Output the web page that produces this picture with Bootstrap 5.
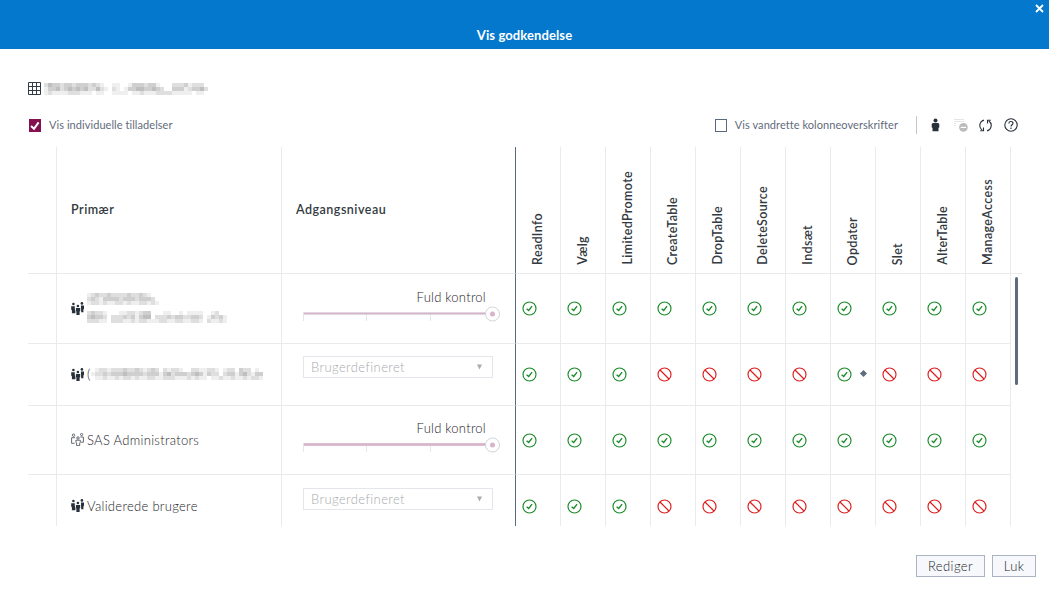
<!DOCTYPE html>
<html lang="da">
<head>
<meta charset="utf-8">
<meta name="viewport" content="width=device-width, initial-scale=1">
<title>Vis godkendelse</title>
<link rel="stylesheet" href="https://cdn.jsdelivr.net/npm/bootstrap@5.3.0/dist/css/bootstrap.min.css">
<style>
body{font-family:Lato,"Liberation Sans",sans-serif;font-size:13px;line-height:18px;color:#333a42;background:#fff;height:590px;overflow:hidden}
svg{display:block;flex:none}
.title-bar{height:49px;background:#0378cd;padding-top:26px;font-size:13px;letter-spacing:.1px}
.close-btn{top:4px;right:5px;width:9px;height:9px}
.object-line{height:14px;margin:32px 0 0 28px}
.mosaic{margin:2px 0 0 3px}
.option-row{height:20px;margin:20px 31px 0 29px;font-size:11px;color:#5f6b7b}
.option-row .caption-text{letter-spacing:.06px;margin-top:-1px}
.tick-box{width:12px;height:13px;border:1px solid #5c6a80;background:#fff}
.tick-box.on{background:#84104f;border-color:#84104f}
.divider{width:1px;height:18px;background:#c3c8d0;margin-left:18px}
.tools svg:nth-child(1){margin-left:14px}
.tools svg:nth-child(2){margin-left:14px}
.tools svg:nth-child(3){margin-left:11px}
.tools svg:nth-child(4){margin-left:12px}
.grid-wrap{height:379px;width:994px;margin:12px 0 0 28px}
.grid-table{width:994px;table-layout:fixed;border-collapse:separate;border-spacing:0}
.grid-table th,.grid-table td{padding:0;border:0 solid #e9eaeb;border-width:0 1px 1px 0;vertical-align:middle}
.grid-table th{height:127px;font-weight:600;font-size:12.5px}
.grid-table th.lead-col{padding-left:14px;letter-spacing:.5px}
.grid-table .level{border-right-color:#5c6a7d}
.grid-table td.rest{border:0}
.grid-table th.rest{border-right:0}
.grid-table th.perm{vertical-align:bottom}
.vert{writing-mode:vertical-rl;transform:rotate(180deg);margin:0 auto 8px 13px;line-height:18px;font-weight:600;white-space:nowrap;letter-spacing:.34px}
.who{padding-left:14px;gap:3px}
.who-name{letter-spacing:.3px;margin-top:-1px}
.light-text{font-weight:300;color:#1c232b}
.slider-box{width:197px;margin:-8px 0 0 21px}
.slider-label{padding-right:14px;line-height:18px;letter-spacing:.25px}
.drop-box{width:190px;height:22px;margin:-15px 0 0 21px;padding:0 10px 0 7px;border:1px solid #e3e6ea;color:#a9abae;letter-spacing:.4px}
.perm-icon{margin-left:5.5px}
.mark-dot{width:5px;height:5px;background:#5f6c80;transform:rotate(45deg);margin:-2px 0 0 9.5px}
.thumb{top:277px;left:1015px;width:3px;height:108px;background:#5f6c80}
.foot{margin:29px 13px 0 0;gap:7px}
.foot .btn{height:22px;border:1px solid #aab3c2;border-radius:0;background:#f6f8fb;color:#1c232b;font-size:13px;font-weight:300;line-height:19px;padding:0;letter-spacing:.4px}
.w-edit{width:69px}.w-close{width:44px}
</style>
</head>
<body class="position-relative">
<svg width="0" height="0" class="position-absolute">
<symbol id="ok" viewBox="0 0 15 15"><circle cx="7.5" cy="7.5" r="6.5" fill="none" stroke="#198a28" stroke-width="1.15"/><path d="M4.6 7.7 6.7 9.5 10.1 5.1" fill="none" stroke="#198a28" stroke-width="1.3"/></symbol>
<symbol id="no" viewBox="0 0 15 15"><circle cx="7.5" cy="7.5" r="6.5" fill="none" stroke="#dc1e1e" stroke-width="1.15"/><path d="M3 3 12 12" stroke="#dc1e1e" stroke-width="1.2"/></symbol>
<symbol id="group" viewBox="0 0 13 13"><g fill="#28303a"><circle cx="2.4" cy="2" r="1.3"/><circle cx="10.9" cy="1.4" r="1.3"/><circle cx="6.9" cy="4" r="1.3"/><path d="M.2 4.2h3.6v2.9l.6 2.2v1.9H.9V8.3L.2 7.6zM9.9 3.4H13v3.4l-.6.6v2.9h-2.2zM4.9 5.9h4.3v3.2l-.6.5V13H5.4V9.6l-.5-.5z"/></g></symbol>
<symbol id="group-line" viewBox="0 0 13 13"><g fill="none" stroke="#4a5058" stroke-width=".85"><circle cx="2.5" cy="2.2" r="1.2"/><circle cx="10.6" cy="1.5" r="1.1"/><circle cx="7" cy="5" r="1.2"/><path d="M4.2 4.7H.6v5.6h3M9.3 4h3.1v5.2H10M4.9 7.2h4.4v2.3l-.6.4v2.7H5.6V9.9l-.7-.4z"/></g></symbol>
</svg>

<header class="title-bar text-white text-center fw-bold position-relative">
  Vis godkendelse
  <svg class="close-btn position-absolute" viewBox="0 0 9 9"><path d="M1 1l7 7M8 1 1 8" stroke="#fff" stroke-width="1.8"/></svg>
</header>

<div class="object-line d-flex align-items-center">
  <svg width="13" height="13" viewBox="0 0 13 13"><path d="M.5.5h12v12H.5zM.5 4.5h12M.5 8.5h12M4.5.5v12M8.5.5v12" fill="none" stroke="#333b46"/></svg>
  <div class="mosaic" data-rows="24332332333232100110013332331000222312220|13342343434224210210133443343200333123342|12111122211101100111101121112222111110110" data-width="164"></div>
</div>

<div class="option-row d-flex align-items-center">
  <span class="tick-box on d-flex"><svg width="10" height="11" viewBox="0 0 10 11"><path d="M1 6 4 8.8 8.6 2.3" fill="none" stroke="#fff" stroke-width="2"/></svg></span>
  <span class="ms-2 caption-text">Vis individuelle tilladelser</span>
  <span class="tick-box ms-auto"></span>
  <span class="ms-2 caption-text">Vis vandrette kolonneoverskrifter</span>
  <span class="divider"></span>
  <div class="tools d-flex align-items-center">
    <svg width="9" height="14" viewBox="0 0 9 14" fill="#28303a"><circle cx="4.5" cy="2.6" r="2"/><path d="M.7 6.3Q1 5 2.5 5h4Q8 5 8.3 6.3v3l-.8.7v3.2h-6V10l-.8-.7z"/></svg>
    <svg width="14" height="14" viewBox="0 0 14 14"><path d="M.5 1.5h10M.5 3.5h10M.5 5.5h2M.5 7.5h2" stroke="#c9cbcd" stroke-dasharray="1 1"/><circle cx="9.4" cy="9.4" r="4.3" fill="#b9bbbd"/><path d="M6.7 9.4h5.4" stroke="#fff" stroke-width="1.2"/></svg>
    <svg width="13" height="13" viewBox="0 0 13 13" fill="none" stroke="#28303a" stroke-width="1.1"><path d="M5 1.1C-.2 2.7-.3 8.8 3.2 11M8 11.9c5.2-1.6 5.3-7.7 1.8-9.9"/><path d="M4.5 8.5v3.2H1.2M8.5 4.5V1.3h3.3"/></svg>
    <svg width="14" height="14" viewBox="0 0 14 14" fill="none" stroke="#28303a" stroke-width="1.1"><circle cx="7" cy="7" r="6.2"/><path d="M4.8 5.4C4.9 2.8 9 2.9 9 5.3 9 6.8 7 6.8 7 8.5M7 9.6v1.3"/></svg>
  </div>
</div>

<main class="grid-wrap overflow-hidden">
<table class="grid-table">
<colgroup id="cols"></colgroup>
<thead><tr id="head"><th></th><th class="lead-col">Primær</th><th class="level lead-col">Adgangsniveau</th></tr></thead>
<tbody id="rows"></tbody>
</table>
</main>
<div class="thumb position-absolute rounded-pill"></div>

<footer class="foot d-flex justify-content-end">
  <button class="btn w-edit" type="button">Rediger</button>
  <button class="btn w-close" type="button">Luk</button>
</footer>

<script src="https://cdn.jsdelivr.net/npm/bootstrap@5.3.0/dist/js/bootstrap.bundle.min.js"></script>
<script>
const perms = ['ReadInfo','Vælg','LimitedPromote','CreateTable','DropTable','DeleteSource','Indsæt','Opdater','Slet','AlterTable','ManageAccess'];
document.getElementById('cols').innerHTML = [29,225,234,...perms.map(() => 45),11].map(w => `<col style="width:${w}px">`).join('');
document.getElementById('head').insertAdjacentHTML('beforeend', perms.map(p => `<th class="perm"><div class="vert">${p}</div></th>`).join('') + '<th class="rest"></th>');

// Masked names are drawn as grey blocks, one digit per block
function mosaic(rows, width) {
  let out = '';
  rows.split('|').forEach((r, y) => [...r].slice(0, Math.floor(width / 4)).forEach((d, x) => {
    const v = 255 - d * 16;
    if (+d) out += `<rect x="${x * 4}" y="${y * 4}" width="4" height="4" fill="rgb(${v},${v},${v})"/>`;
  }));
  return `<svg width="${width}" height="12" shape-rendering="crispEdges">${out}</svg>`;
}
document.querySelectorAll('.mosaic').forEach(m => m.innerHTML = mosaic(m.dataset.rows, +m.dataset.width));

const slider = thick => `<div class="slider-box"><div class="slider-label light-text text-end">Fuld kontrol</div>
<svg width="197" height="16" viewBox="0 0 197 16"><path d="M.5 8v7M63.5 9v6M127.5 9v6" stroke="#e3e6ea"/><path d="M0 7.5h188" stroke="#e2e0e8" stroke-width="3"/><path d="M1 7.5h187" stroke="#d9b3c9" stroke-width="${thick}"/><circle cx="189.5" cy="8" r="7" fill="#fff" stroke="#d0d4da"/><circle cx="189.5" cy="8" r="2.5" fill="#d9b3c9"/></svg></div>`;
const drop = `<div class="drop-box d-flex align-items-center justify-content-between"><span class="fw-light">Brugerdefineret</span><svg width="5" height="6" viewBox="0 0 5 6"><path d="M0 .5h5L2.5 5.5z" fill="#a9acb0"/></svg></div>`;
const hidden1 = '<div style="margin-top:-2px">' + mosaic('123223222232232100|232133332333233320|122121122121122121',72) + '</div><div style="height:6px"></div>' + mosaic('232210001122123300011001011110012000|343320222323134402223233223320132310|222110222112122111221122112210211210',144);
const hidden2 = '<div class="d-flex align-items-center" style="margin-top:-1px"><span class="light-text" style="width:4px">(</span>' + mosaic('0122122232232123202122100221122101220322010|1223233343333233313423332343132202331342133|0112112122121122112221112121101121121121221',172) + '</div>';
const data = [
  {h:70, icon:'group', name:`<div>${hidden1}</div>`, level:slider(1.6), p:'11111111111'},
  {h:62, icon:'group', name:hidden2, level:drop, p:'11100001000', dot:7},
  {h:69, icon:'group-line', name:'<span class="who-name light-text">SAS Administrators</span>', level:slider(2.6), p:'11111111111'},
  {h:63, icon:'group', name:'<span class="who-name light-text">Validerede brugere</span>', level:drop, p:'11100000000'}
];
document.getElementById('rows').innerHTML = data.map(r => `<tr style="height:${r.h}px"><td></td>
<td><div class="who d-flex align-items-center"><svg width="13" height="13" style="margin-top:-1px"><use href="#${r.icon}"/></svg>${r.name}</div></td>
<td class="level">${r.level}</td>` + [...r.p].map((v, i) => `<td><div class="d-flex align-items-center perm-icon"><svg width="15" height="15"><use href="#${v === '1' ? 'ok' : 'no'}"/></svg>${r.dot === i ? '<span class="mark-dot"></span>' : ''}</div></td>`).join('') + '<td class="rest"></td></tr>').join('');
</script>
</body>
</html>
